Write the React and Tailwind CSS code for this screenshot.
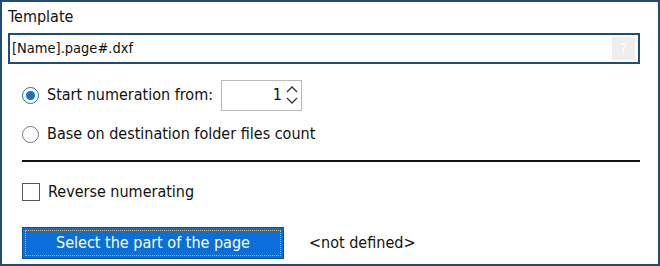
export default function App() {
  return (
    <div
      className="w-[660px] h-[266px] bg-white border-2 border-[#1d4d7d] pl-[6px] pr-[18px] pt-[5px] text-[16px] text-[#111]"
      style={{ fontFamily: '"DejaVu Sans Condensed", "DejaVu Sans", Verdana, sans-serif' }}
    >
      <div className="leading-[20px]">Template</div>
      <div className="mt-[6px] h-[31px] border-2 border-[#1d4d7d] flex items-center pl-[2px] pr-[3px]">
        <span className="flex-1 text-[14.5px]">[Name].page#.dxf</span>
        <span className="w-[23px] h-[23px] bg-[#eeeeee] text-white flex items-center justify-center text-[14px]">?</span>
      </div>

      <div className="pl-[14px]">
        <div className="mt-[16px] flex items-center h-[30px]">
          <span className="w-[17px] h-[17px] rounded-full border border-[#1a6fc9] flex items-center justify-center bg-white">
            <span className="w-[9px] h-[9px] rounded-full bg-[#1a6fc9]" />
          </span>
          <span className="ml-[8px] w-[174px]">Start numeration from:</span>
          <div className="w-[81px] h-[31px] border border-[#b8b8b8] flex items-center justify-end pr-[2px]">
            <span>1</span>
            <svg width="14" height="24" viewBox="0 0 14 24" className="ml-[3px]">
              <path d="M2 9 L7 4 L12 9" fill="none" stroke="#333" strokeWidth="1.3" />
              <path d="M2 15 L7 20 L12 15" fill="none" stroke="#333" strokeWidth="1.3" />
            </svg>
          </div>
        </div>

        <div className="mt-[12px] flex items-center h-[24px]">
          <span className="w-[17px] h-[17px] rounded-full border border-[#777] bg-white" />
          <span className="ml-[8px]">Base on destination folder files count</span>
        </div>

        <div className="mt-[14px] h-[2px] bg-[#111]" />

        <div className="mt-[20px] flex items-center h-[20px]">
          <span className="w-[18px] h-[18px] border border-[#555] bg-white" />
          <span className="ml-[8px]">Reverse numerating</span>
        </div>

        <div className="mt-[25px] flex items-center">
          <button className="w-[262px] h-[32px] bg-[#0a6fd8] border border-[#0a52a8] p-[2px] text-white">
            <span className="w-full h-full flex items-center justify-center border border-dotted border-[#f3b04a]">
              Select the part of the page
            </span>
          </button>
          <span className="ml-[25px]">&lt;not defined&gt;</span>
        </div>
      </div>
    </div>
  );
}
